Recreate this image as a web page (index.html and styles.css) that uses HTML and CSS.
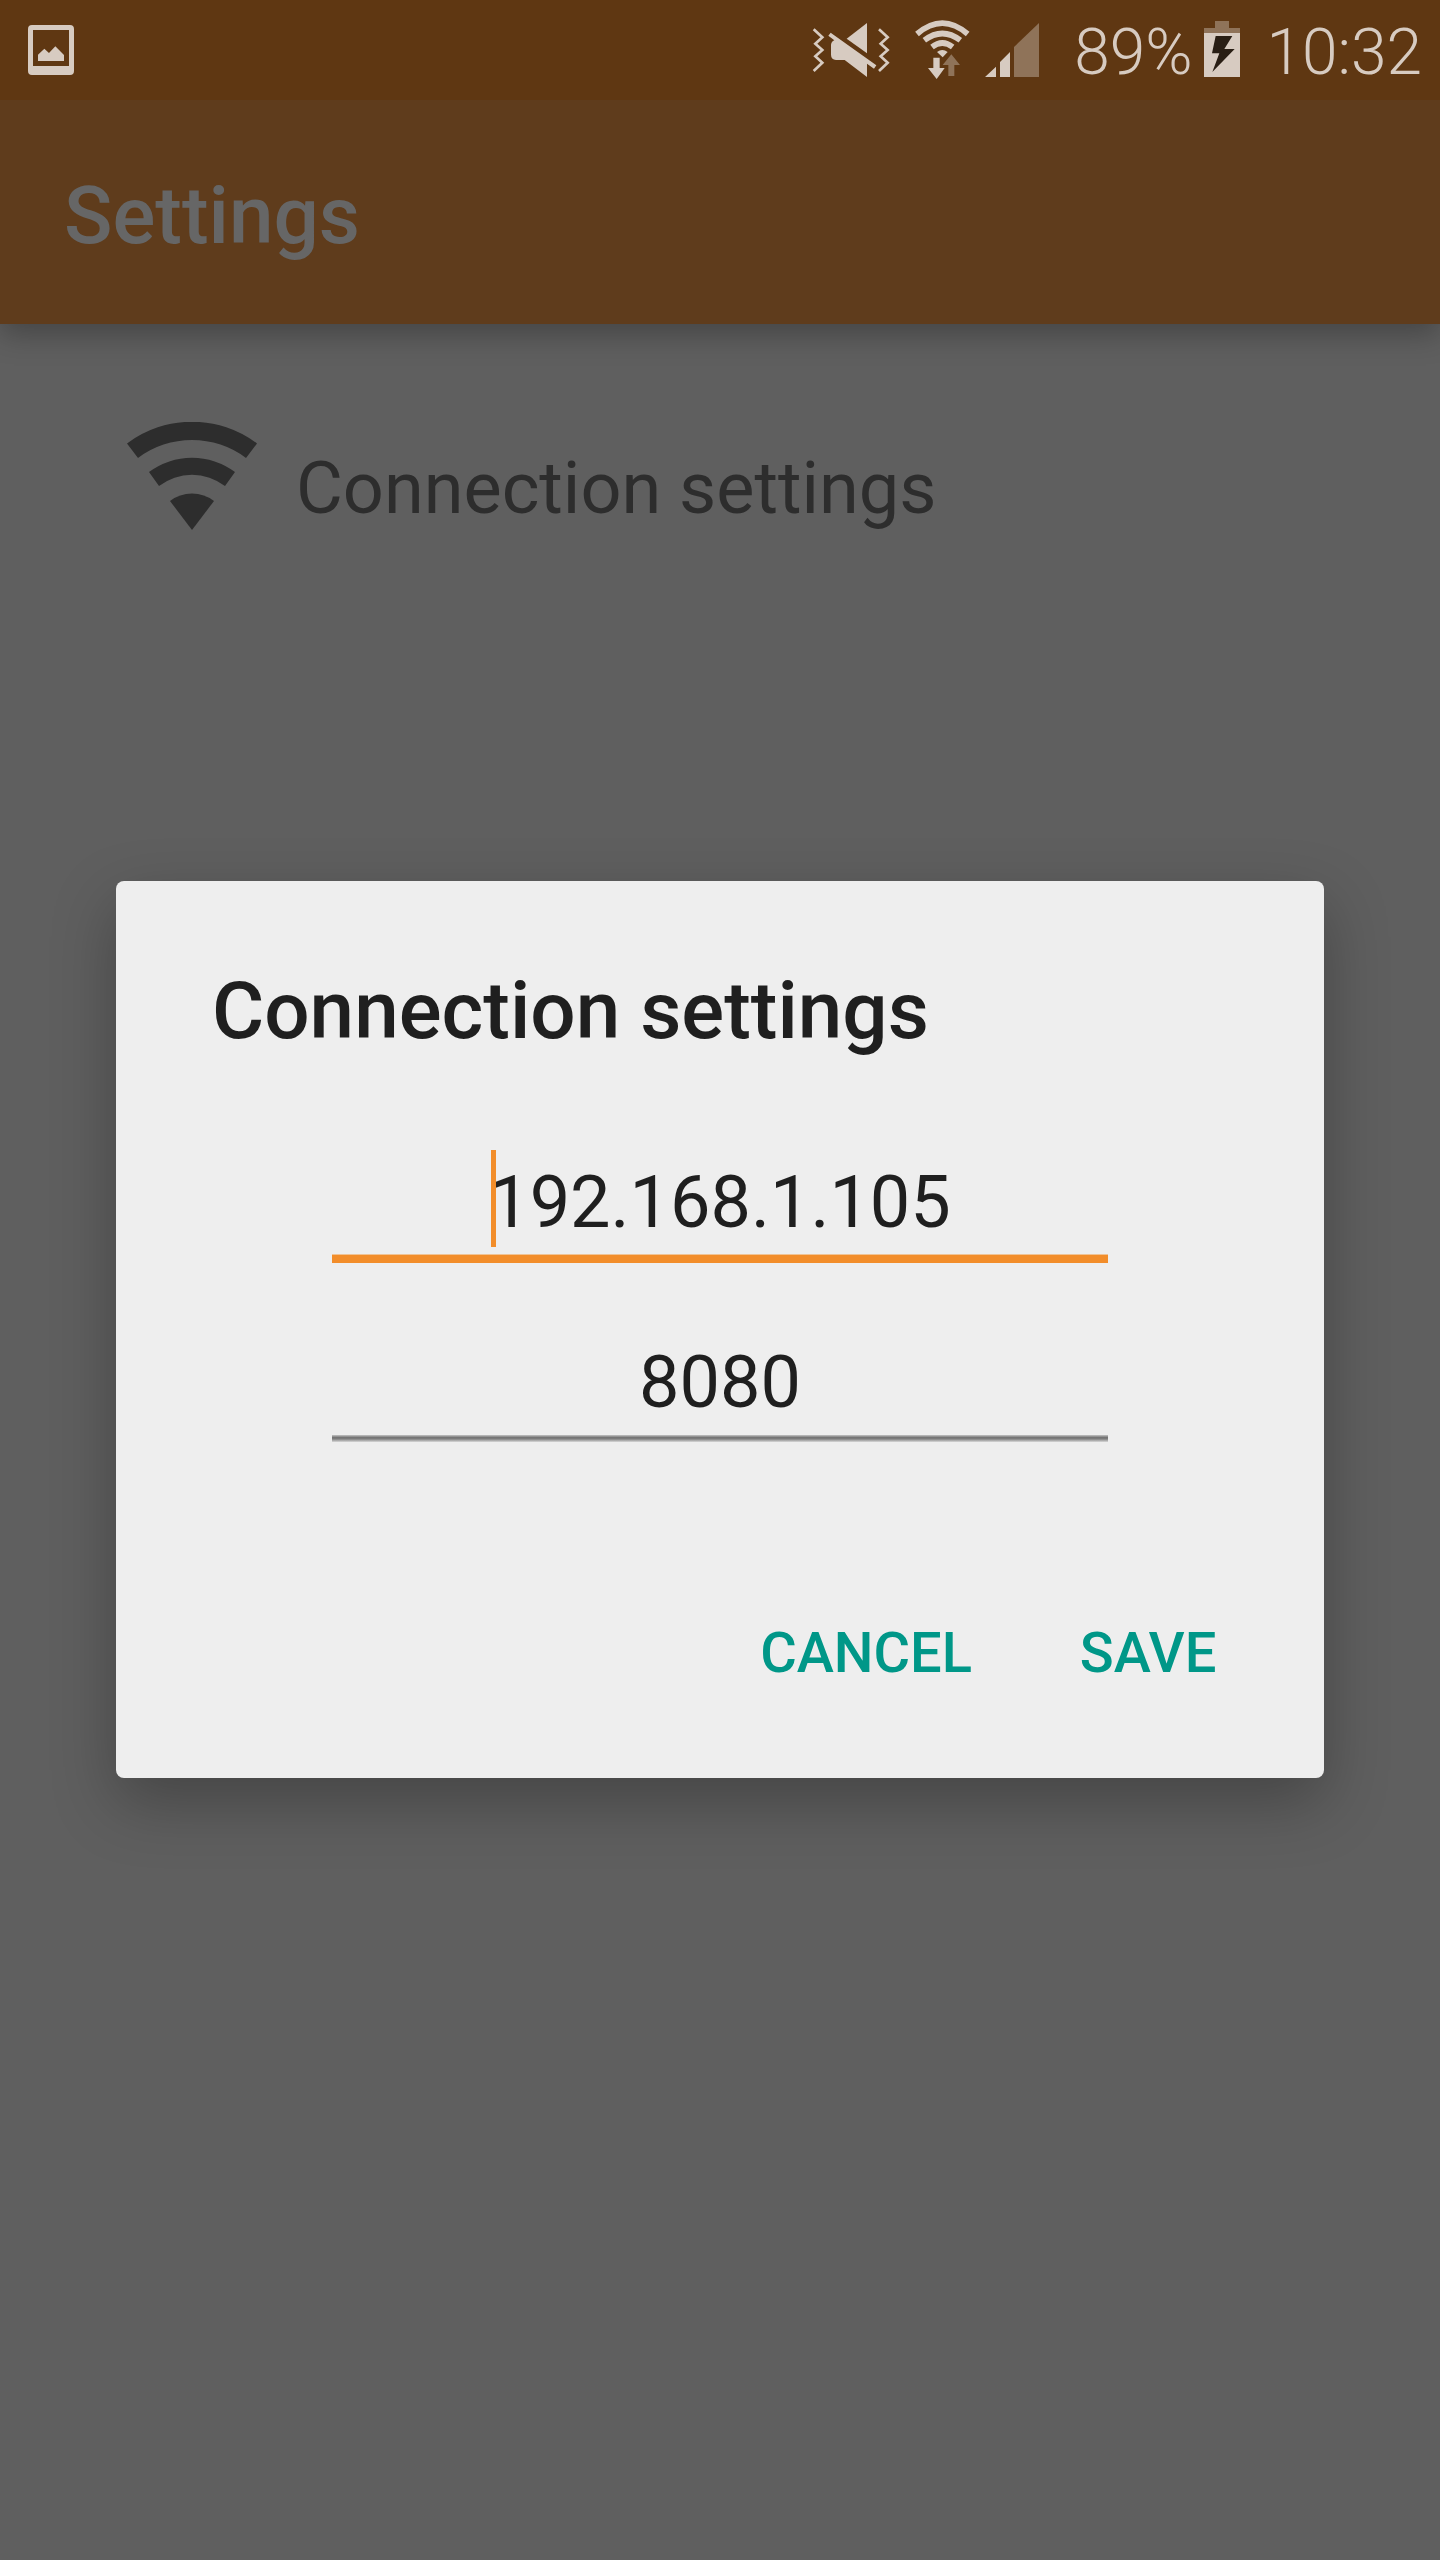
FILE: index.html
```html
<!DOCTYPE html>
<html lang="en">
<head>
<meta charset="utf-8">
<meta name="viewport" content="width=device-width, initial-scale=1">
<title>Settings</title>
<link rel="stylesheet" href="styles.css">
</head>
<body>
<div class="screen">
  <div class="status-bar">
    <svg class="icon-picture" viewBox="84 0 138 300" aria-hidden="true">
      <path fill-rule="evenodd" d="M96 75H210Q222 75 222 87V213Q222 225 210 225H96Q84 225 84 213V87Q84 75 96 75ZM99 90V198H207V90Z"/>
      <path d="M114 183V164L133 146L147 159L166 139L192 165V183Z"/>
    </svg>
    <div class="status-icons">
      <svg class="icon-mute" viewBox="36 0 234 300" aria-hidden="true">
        <path d="M201 69V160L140 116Z"/>
        <path d="M92 98L229 196L222 206L201 191V231L134 180H108Q93 178 93 164V135Q94 124 103 121L85 107Z"/>
        <path class="wave" d="M41 88L67 112L46 131L67 150L46 169L67 188L41 213M237 88L263 112L242 131L263 150L242 169L263 188L237 213"/>
      </svg>
      <svg class="icon-wifi" viewBox="342 0 168 300" aria-hidden="true">
        <path class="arc" d="M351 102Q427 37 503 102M373 121Q427 80 481 121M396 141Q427 117 458 141"/>
        <path d="M411 156Q427 144 443 156L428 172Z"/>
        <path d="M400 173H419V204H434L410 237L384 204H400Z"/>
        <path class="dim" d="M454 163L480 195H463V228H445V195H428Z"/>
      </svg>
      <svg class="icon-signal" viewBox="555 0 162 300" aria-hidden="true">
        <path d="M555 231L588 200V231ZM600 231V186L630 156V231Z"/>
        <path class="dim" d="M642 231V141L717 69V231Z"/>
      </svg>
    </div>
    <span class="status-text">89%</span>
    <svg class="icon-battery" viewBox="462 0 108 300" aria-hidden="true">
      <path class="dim" d="M495 63H537V84H570V99H462V84H495Z"/>
      <path d="M462 99H570V231H462Z"/>
      <path class="bolt" d="M497 108H547L523 147H554L487 216L508 160H486Z"/>
    </svg>
    <time class="status-text">10:32</time>
  </div>

  <header class="app-bar"><h1>Settings</h1></header>

  <main class="settings">
    <a class="setting" href="#connection">
      <svg class="icon-connection" viewBox="0 0 130 108" aria-hidden="true">
        <path d="M0 21.5A108 108 0 0 1 130 21.5L119 36A90 90 0 0 0 11 36Z"/>
        <path d="M22 50A72 72 0 0 1 108 50L98 64A54 54 0 0 0 32 64Z"/>
        <path d="M43 79A36 36 0 0 1 87 79L65 108Z"/>
      </svg>
      <span>Connection settings</span>
    </a>
  </main>

  <div class="overlay">
    <form class="dialog" id="connection" role="dialog" aria-labelledby="dialog-title">
      <h2 id="dialog-title">Connection settings</h2>
      <div class="fields">
        <div class="field">
          <input class="active" type="text" value="192.168.1.105" aria-label="IP address">
          <span class="caret"></span>
        </div>
        <div class="field">
          <input type="text" value="8080" aria-label="Port">
        </div>
      </div>
      <div class="actions">
        <button type="button">CANCEL</button>
        <button type="button">SAVE</button>
      </div>
    </form>
  </div>
</div>
</body>
</html>
```

FILE: styles.css
```css
* {
  box-sizing: border-box;
}

body {
  margin: 0;
  font-family: Roboto, "Liberation Sans", sans-serif;
}

h1,
h2 {
  margin: 0;
  font-size: 80px;
  font-weight: 500;
  line-height: 94px;
}

.screen {
  position: relative;
  min-height: 100vh;
  background: #5f5f5f;
}

.status-bar {
  position: relative;
  z-index: 1;
  display: flex;
  align-items: center;
  height: 100px;
  padding: 0 18px 0 28px;
  background: #5f3712;
  color: #d7cbc1;
}

.status-bar svg {
  flex: none;
  height: 100px;
  fill: #d7cbc1;
}

.status-bar .dim {
  fill: #8f7359;
}

.status-icons {
  display: flex;
  margin-left: auto;
  margin-right: 35px;
}

.icon-picture {
  width: 46px;
}

.icon-mute {
  width: 78px;
  margin-right: 24px;
}

.icon-wifi {
  width: 56px;
  margin-right: 15px;
}

.icon-signal {
  width: 54px;
}

.icon-battery {
  width: 36px;
  margin: 0 27px 0 11px;
}

.status-bar .wave,
.status-bar .arc {
  fill: none;
  stroke: #d7cbc1;
  stroke-width: 8;
}

.status-bar .arc {
  stroke-width: 17;
}

.status-bar .bolt {
  fill: #291e14;
}

.status-text {
  padding-top: 6px;
  font-size: 64px;
  font-weight: 300;
  line-height: 76px;
}

.app-bar {
  display: flex;
  align-items: center;
  height: 224px;
  padding: 8px 64px 0;
  background: #5f3c1c;
  color: #666;
  box-shadow: 0 10px 28px rgba(0, 0, 0, 0.28);
}

.settings {
  padding: 98px 127px;
}

.setting {
  display: flex;
  align-items: flex-start;
  gap: 39px;
  color: #2d2d2d;
  font-size: 72px;
  line-height: 84px;
  text-decoration: none;
}

.setting span {
  padding-top: 25px;
}

.icon-connection {
  flex: none;
  width: 130px;
  height: 108px;
  fill: #2d2d2d;
}

.overlay {
  position: absolute;
  inset: 100px 0 0;
  display: flex;
  align-items: center;
  padding: 0 116px 2px;
}

.dialog {
  flex: 1;
  padding: 83px 48px 53px;
  border-radius: 8px;
  background: #eee;
  color: #1f1f1f;
  box-shadow: 0 24px 64px rgba(0, 0, 0, 0.28);
}

.dialog h2 {
  padding: 0 48px;
}

.fields {
  display: flex;
  flex-direction: column;
  gap: 61px;
  padding: 85px 168px 139px;
}

.field {
  position: relative;
}

.field input {
  display: block;
  width: 100%;
  height: 118px;
  padding: 17px 0;
  border: 0;
  outline: 0;
  background: linear-gradient(#c4c4c4, #757575 35%, #7d7d7d 55%, #d8d8d8) bottom / 100% 7px no-repeat;
  color: #1f1f1f;
  font: inherit;
  font-size: 72px;
  line-height: 84px;
  text-align: center;
}

.field .active {
  height: 120px;
  background: linear-gradient(#f0c394 1px, #f28d2a 1px) bottom / 100% 9px no-repeat;
}

.caret {
  position: absolute;
  top: 7px;
  left: calc(50% - 229px);
  width: 5px;
  height: 97px;
  background: #f28d2a;
}

.actions {
  display: flex;
  justify-content: flex-end;
  gap: 16px;
}

.actions button {
  min-width: 256px;
  height: 144px;
  padding: 0 32px;
  border: 0;
  background: none;
  color: #009788;
  font: inherit;
  font-size: 56px;
  font-weight: 500;
  line-height: 66px;
}
```
